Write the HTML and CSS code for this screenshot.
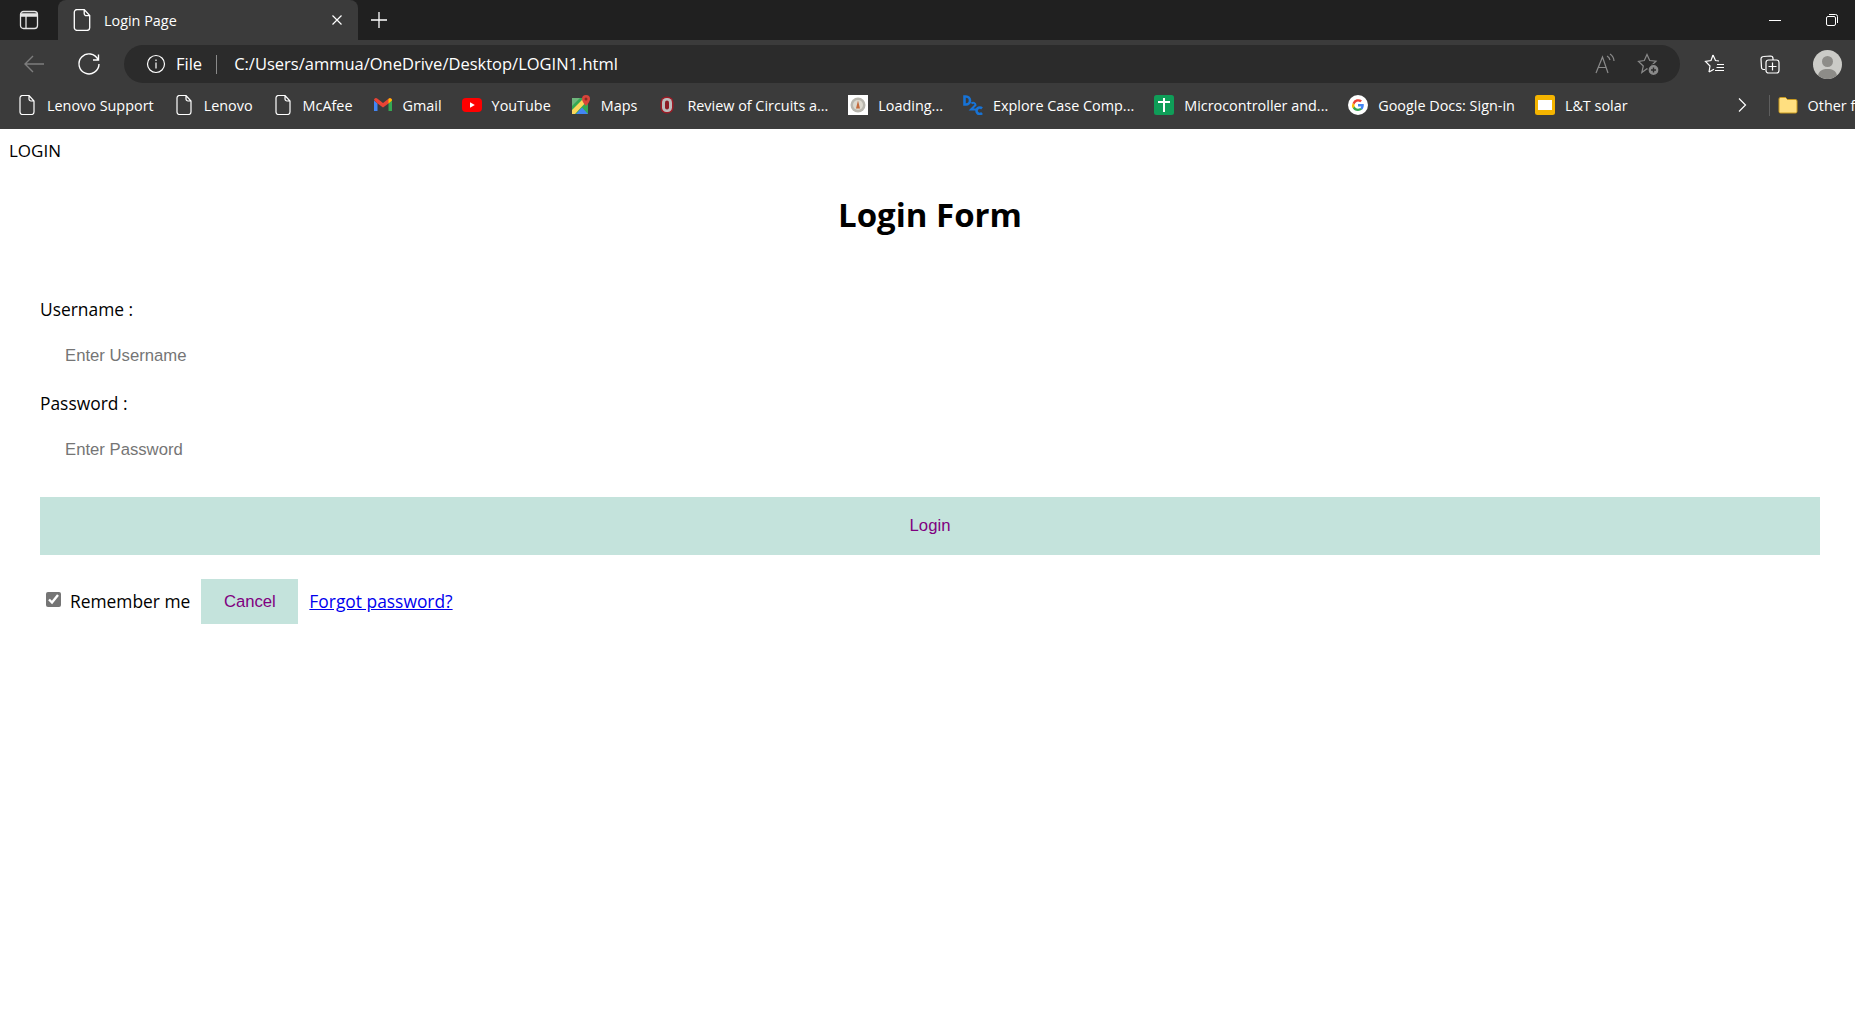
FILE: index.html

```html
<!DOCTYPE html>
<html lang="en">
<head>
  <meta charset="UTF-8" />
  <meta name="viewport" content="width=device-width, initial-scale=1.0"/>
  <title>Login Page</title>
  <link rel="stylesheet" href="styles.css">
</head>
<body>

  <svg class="defs" width="0" height="0">
    <symbol id="doc" viewBox="0 0 20 20">
      <path d="M3 3a2.500 2.500 0 0 1 2.500-2.500h6.500l5 5.500v11a2.500 2.500 0 0 1-2.500 2.500h-9a2.500 2.500 0 0 1-2.500-2.500z M12 0.500v3.500a2 2 0 0 0 2 2h3" fill="none" stroke="currentColor" stroke-width="1.200"/>
    </symbol>
  </svg>

  <header class="browser">
    <div class="tabbar">
      <svg class="tab-actions" width="20" height="20" viewBox="0 0 20 20" fill="none" stroke="#e4e4e4" stroke-width="1.300">
        <rect x="1.500" y="1.500" width="17" height="17" rx="3"/>
        <path d="M2 4h16v2H2z" fill="#e4e4e4"/>
        <path d="M7 6v12.500"/>
      </svg>
      <div class="tab">
        <svg class="icon" width="22" height="22"><use href="#doc"/></svg>
        <span class="tab-title">Login Page</span>
        <svg class="tab-close" width="12" height="12" viewBox="0 0 12 12" stroke="#fff" stroke-width="1.200"><path d="M1.500 1.500l9 9M10.500 1.500l-9 9"/></svg>
      </div>
      <svg class="new-tab" width="20" height="20" viewBox="0 0 20 20" stroke="#fff" stroke-width="1.300"><path d="M10 2v16M2 10h16"/></svg>
      <div class="window-controls">
        <svg width="14" height="14" viewBox="0 0 14 14" stroke="#fff"><path d="M1 7.500h12"/></svg>
        <svg width="14" height="14" viewBox="0 0 14 14" fill="none" stroke="#fff"><rect x="1.500" y="3.500" width="9" height="9" rx="1.500"/><path d="M4 1.500h6.500a2 2 0 0 1 2 2v6.500"/></svg>
      </div>
    </div>

    <div class="toolbar">
      <svg class="nav back" width="24" height="24" viewBox="0 0 24 24" fill="none" stroke="#7d7d7d" stroke-width="1.400"><path d="M22 12H3M11 4l-8 8 8 8"/></svg>
      <svg class="nav reload" width="24" height="24" viewBox="0 0 24 24" fill="none" stroke="#fff" stroke-width="1.400"><path d="M21 7.500A10 10 0 1 0 22 12M21.500 2.500V8H16"/></svg>
      <div class="address">
        <svg width="20" height="20" viewBox="0 0 20 20" fill="none" stroke="#fff" stroke-width="1.200"><circle cx="10" cy="10" r="8.500"/><path d="M10 8.500v6M10 5.500v1.500"/></svg>
        <span class="scheme">File</span>
        <span class="divider"></span>
        <span class="url">C:/Users/ammua/OneDrive/Desktop/LOGIN1.html</span>
        <div class="address-end">
          <svg width="22" height="22" viewBox="0 0 22 22" fill="none" stroke="#8a8a8a" stroke-width="1.200"><path d="M2 20L8.500 4 14 20M4.500 14.500h8M13 3a6 6 0 0 1 3 4M16 1a9 9 0 0 1 4 7"/></svg>
          <svg width="24" height="24" viewBox="0 0 24 24" fill="none" stroke="#8a8a8a" stroke-width="1.200"><path d="M11 2.500L13.700 8.500 20 9.200 15.500 13.500 16.800 20 11 16.800 5.800 20.500 7.300 14 2.500 9.500 8.300 8.500z"/><circle cx="17.500" cy="18" r="5.500" fill="#8a8a8a" stroke="#2b2b2b"/><path d="M17.500 15.500v5M15 18h5" stroke="#2b2b2b" stroke-width="1.400"/></svg>
        </div>
      </div>
      <div class="tools">
        <svg width="24" height="24" viewBox="0 0 24 24" fill="none" stroke="#fff" stroke-width="1.200"><path d="M10 3l2.500 5.500 3.500.5M6 20l1-6-4.500-4.500 5.500-1L10 3M6 20l5-2.800M14 12.500h7M13.500 15.500h7.500M12 18.500h9"/></svg>
        <svg width="24" height="24" viewBox="0 0 24 24" fill="none" stroke="#fff" stroke-width="1.200"><path d="M7 17.500H5.500a2 2 0 0 1-2-2L3 7a2.500 2.500 0 0 1 2.500-2.500l7-.5A2.500 2.500 0 0 1 15 6.500V8"/><rect x="8" y="8" width="13" height="13" rx="2.500"/><path d="M14.500 10.500v8M10.500 14.500h8"/></svg>
        <svg class="avatar" width="29" height="29" viewBox="0 0 29 29"><circle cx="14.500" cy="14.500" r="14.500" fill="#cbcbc7"/><circle cx="14.500" cy="11.500" r="5.500" fill="#8d8c88"/><path d="M5 25.500c1-5 4.500-6.500 9.500-6.500s8.500 1.500 9.500 6.500a14.500 14.500 0 0 1-19 0z" fill="#8d8c88"/></svg>
      </div>
    </div>

    <nav class="bookmarks">
      <a class="bookmark"><svg class="icon" width="20" height="20"><use href="#doc"/></svg>Lenovo Support</a>
      <a class="bookmark"><svg class="icon" width="20" height="20"><use href="#doc"/></svg>Lenovo</a>
      <a class="bookmark"><svg class="icon" width="20" height="20"><use href="#doc"/></svg>McAfee</a>
      <a class="bookmark">
        <svg class="icon" width="20" height="20" viewBox="0 0 20 20">
          <path d="M1 5.500V16h3.500V8.500z" fill="#4285f4"/>
          <path d="M19 5.500V16h-3.500V8.500z" fill="#34a853"/>
          <path d="M1 5a2 2 0 0 1 3.200-1.600L10 8l5.800-4.600A2 2 0 0 1 19 5l-3.500 3.500L10 12.500 4.500 8.500z" fill="#ea4335"/>
          <path d="M15.500 4v4.500l3.500-3a2 2 0 0 0-3.500-1.500z" fill="#fbbc04"/>
        </svg>Gmail</a>
      <a class="bookmark">
        <svg class="icon" width="20" height="20" viewBox="0 0 20 20"><rect y="3" width="20" height="14" rx="4" fill="#f00"/><path d="M8 7.200v5.600l4.800-2.800z" fill="#fff"/></svg>YouTube</a>
      <a class="bookmark">
        <svg class="icon" width="20" height="20" viewBox="0 0 20 20">
          <rect x="1" y="3" width="16" height="16" fill="#34a853"/>
          <path d="M1 3h8L1 11z" fill="#6fb57c"/>
          <path d="M1 15L13 3h4v2L4 19H1z" fill="#fbd75b"/>
          <path d="M5 19L11 12.500 17 19z" fill="#4285f4"/>
          <path d="M15 0a4 4 0 0 1 4 4c0 3-4 7-4 7s-4-4-4-7a4 4 0 0 1 4-4z" fill="#d9453a"/>
          <circle cx="15" cy="4" r="1.500" fill="#8c2a22"/>
        </svg>Maps</a>
      <a class="bookmark">
        <svg class="icon" width="20" height="20" viewBox="0 0 20 20"><rect x="3.500" y="1.500" width="13" height="17" rx="6" fill="#9c1c26"/><rect x="5" y="3" width="10" height="14" rx="4.500" fill="#bdbdbd"/><rect x="8" y="5.500" width="4" height="9" rx="2" fill="#8c1c24"/></svg>Review of Circuits a...</a>
      <a class="bookmark">
        <svg class="icon" width="20" height="20" viewBox="0 0 20 20"><rect width="20" height="20" fill="#fff"/><circle cx="10" cy="10" r="7.500" fill="#b8b6ae"/><circle cx="10" cy="10" r="5" fill="#dcd9cf"/><path d="M10 5.500l2 8h-4z" fill="#c46a3c"/></svg>Loading...</a>
      <a class="bookmark">
        <svg class="icon" width="20" height="20" viewBox="0 0 20 20" fill="none" stroke="#1773d6" stroke-width="2.600"><path d="M1.500 1.500v8h1.500a4 4 0 0 0 0-8z"/><path d="M8.500 8.500a2.300 2.300 0 0 1 4 1.500L8 14.500h5" stroke-width="2"/><path d="M19 13.500a3.200 3.200 0 1 0 0 4.500"/></svg>Explore Case Comp...</a>
      <a class="bookmark">
        <svg class="icon" width="20" height="20" viewBox="0 0 20 20"><rect width="20" height="20" rx="2.500" fill="#0f9d58"/><path d="M4 6h5V3h2v3h5v2h-5v9H9V8H4z" fill="#fff"/></svg>Microcontroller and...</a>
      <a class="bookmark">
        <svg class="icon" width="20" height="20" viewBox="0 0 20 20">
          <circle cx="10" cy="10" r="10" fill="#fff"/>
          <path d="M15.800 10.200c0-.5 0-.9-.1-1.300H10v2.500h3.300a2.800 2.800 0 0 1-1.200 1.800l1.900 1.500c1.100-1 1.800-2.600 1.800-4.500z" fill="#4285f4"/>
          <path d="M10 16c1.600 0 3-.5 4-1.400l-1.900-1.500c-.5.400-1.200.6-2.100.6-1.600 0-2.900-1-3.400-2.500l-2 1.500A6 6 0 0 0 10 16z" fill="#34a853"/>
          <path d="M6.600 11.700a3.600 3.600 0 0 1 0-2.300l-2-1.500a6 6 0 0 0 0 5.300z" fill="#fbbc05"/>
          <path d="M10 6.400c.9 0 1.700.3 2.300.9L14 5.600A6 6 0 0 0 4.600 7.900l2 1.500C7.100 7.800 8.400 6.400 10 6.400z" fill="#ea4335"/>
        </svg>Google Docs: Sign-in</a>
      <a class="bookmark">
        <svg class="icon" width="20" height="20" viewBox="0 0 20 20"><rect width="20" height="20" rx="2.500" fill="#f4b400"/><rect x="3" y="5" width="14" height="10" fill="#fff"/></svg>L&amp;T solar</a>
      <svg class="more" width="12" height="16" viewBox="0 0 12 16" fill="none" stroke="#fff" stroke-width="1.200"><path d="M3 1.500L9.500 8 3 14.500"/></svg>
      <span class="bookmarks-sep"></span>
      <a class="bookmark">
        <svg class="icon" width="20" height="20" viewBox="0 0 20 20"><path d="M1 4a1.500 1.500 0 0 1 1.500-1.500h5L9.500 4.500h8A1.500 1.500 0 0 1 19 6v10.500a1.500 1.500 0 0 1-1.500 1.500h-15A1.500 1.500 0 0 1 1 16.500z" fill="#ffdf80" stroke="#c99a1e"/></svg>Other favorites</a>
    </nav>
  </header>

  <main class="page">
    <div class="page-title">LOGIN</div>
    <h1>Login Form</h1>
    <form class="login-form">
      <label class="field-label" for="username">Username :</label>
      <input class="field" id="username" type="text" placeholder="Enter Username">
      <label class="field-label" for="password">Password :</label>
      <input class="field" id="password" type="password" placeholder="Enter Password">
      <button class="btn btn-login" type="button">Login</button>
      <div class="form-footer">
        <input class="remember" id="remember" type="checkbox" checked>
        <label for="remember">Remember me</label>
        <button class="btn btn-cancel" type="button">Cancel</button>
        <a class="forgot" href="#">Forgot password?</a>
      </div>
    </form>
  </main>

</body>
</html>
```

FILE: styles.css

```css
html, body {
  margin: 0;
  height: 100%;
  overflow: hidden;
  background: #fff;
}
.defs {
  position: absolute;
}

/* browser chrome */
.browser {
  font-family: 'Open Sans', sans-serif;
  font-size: 14.4px;
  color: #fff;
  height: 129px;
  background: #3b3b3b;
  overflow: hidden;
}
.icon {
  flex-shrink: 0;
}
.tabbar {
  display: flex;
  align-items: center;
  height: 40px;
  background: #202020;
}
.tab-actions {
  margin-left: 19px;
}
.tab {
  display: flex;
  align-items: center;
  width: 300px;
  height: 40px;
  margin-left: 19px;
  padding: 0 15px 0 13px;
  box-sizing: border-box;
  background: #3b3b3b;
  border-radius: 8px 8px 0 0;
}
.tab-title {
  margin-left: 11px;
  flex: 1;
}
.new-tab {
  margin-left: 11px;
}
.window-controls {
  display: flex;
  gap: 43px;
  margin-left: auto;
  margin-right: 16px;
}
.toolbar {
  display: flex;
  align-items: center;
  height: 48px;
}
.nav.back {
  margin-left: 22px;
}
.nav.reload {
  margin-left: 31px;
}
.address {
  display: flex;
  align-items: center;
  width: 1556px;
  height: 38px;
  margin-left: 23px;
  padding: 0 20px 0 22px;
  box-sizing: border-box;
  background: #2b2b2b;
  border-radius: 19px;
  font-size: 16.5px;
}
.scheme {
  margin: -2px 0 0 10px;
}
.url {
  margin-top: -2px;
}
.divider {
  width: 1px;
  height: 19px;
  margin: 0 17px 0 14px;
  background: #8a8a8a;
}
.address-end {
  display: flex;
  align-items: center;
  gap: 20px;
  margin-left: auto;
}
.tools {
  display: flex;
  align-items: center;
  gap: 31px;
  margin-left: 23px;
}
.bookmarks {
  display: flex;
  align-items: center;
  height: 34px;
  padding: 0 0 7px 17px;
  white-space: nowrap;
}
.bookmark {
  display: flex;
  align-items: center;
  gap: 10px;
  margin-right: 20px;
  flex-shrink: 0;
}
.more {
  margin-left: 88px;
  flex-shrink: 0;
}
.bookmarks-sep {
  width: 1px;
  height: 21px;
  margin: 0 8px 0 21px;
  background: #5e5e5e;
  flex-shrink: 0;
}

/* the page itself */
.page {
  padding: 10px 8px 8px;
  font-family: 'Open Sans', sans-serif;
  font-size: 17.4px;
  color: #000;
}
.page-title {
  padding-left: 1px;
  font-size: 17px;
  line-height: 24px;
}
h1 {
  margin: 27px 0 0;
  padding-left: 5px;
  font-size: 33px;
  line-height: 50px;
  font-weight: 700;
  text-align: center;
}
.login-form {
  display: flex;
  flex-direction: column;
  align-items: flex-start;
  margin-top: 57px;
  padding: 0 27px 0 32px;
}
.field-label {
  line-height: 24px;
}
.field {
  width: 100%;
  height: 46px;
  box-sizing: border-box;
  margin: 12px 0;
  padding: 0 25px;
  border: none;
  outline: none;
  font-family: 'Liberation Sans', sans-serif;
  font-size: 16.7px;
}
.field::placeholder {
  color: #757575;
}
.btn {
  border: none;
  background: #c4e3dc;
  color: #800080;
  font-family: 'Liberation Sans', sans-serif;
  font-size: 16.7px;
}
.btn-login {
  width: 100%;
  height: 58px;
  margin-top: 12px;
}
.form-footer {
  display: flex;
  align-items: center;
  margin-top: 22px;
}
.remember {
  width: 15px;
  height: 15px;
  margin: 0 9px 2px 6px;
  accent-color: #757575;
}
.btn-cancel {
  width: 97px;
  height: 45px;
  margin: 2px 0 0 11px;
}
.forgot {
  margin-left: 11px;
  color: #00e;
  text-decoration: underline;
}
```
